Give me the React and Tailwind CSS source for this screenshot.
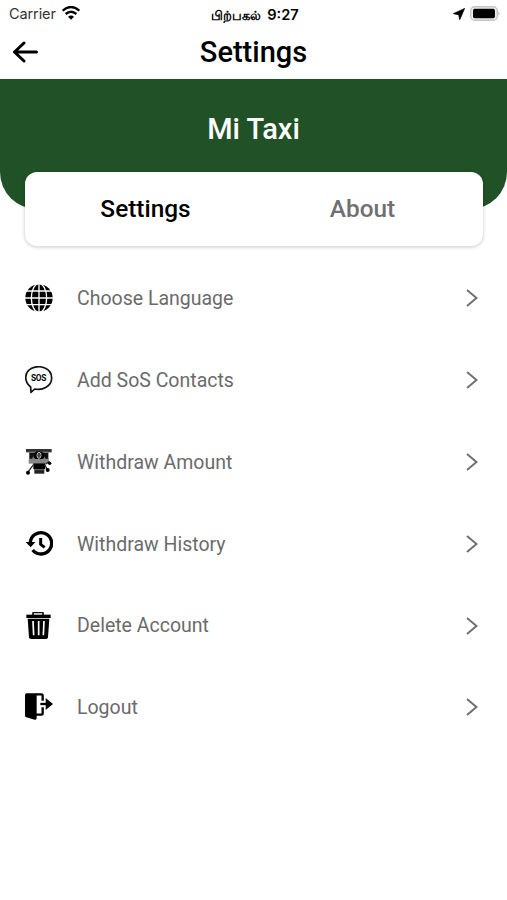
import React, { useState } from 'react';
import clsx from 'clsx';

const GlobeIcon = () => (
    <svg viewBox="0 0 84 84" className="size-7" fill="none" stroke="#fff" strokeWidth="4">
        <circle cx="42" cy="42" r="41" fill="#000" stroke="none" />
        <ellipse cx="42" cy="42" rx="23" ry="43" />
        <path d="M42 0v84M0 42h84M4 21h76M4 62h76" />
    </svg>
);

const SosIcon = () => (
    <svg viewBox="0 0 84 84" className="size-7">
        <path d="M17 63C-4 47-2 18 20 7c25-12 60 0 60 29 0 25-27 38-51 33L18 79Z" fill="none" stroke="#111" strokeWidth="5" strokeLinejoin="round" />
        <text x="41" y="45" textAnchor="middle" textLength="46" className="font-['Roboto',sans-serif] text-[25px] font-bold">SOS</text>
    </svg>
);

const WithdrawIcon = () => (
    <svg viewBox="0 0 84 84" className="size-7">
        <path d="M3 3h77v10H3z" fill="#333" />
        <path d="M12 11h59v28H12z" fill="#777" />
        <path d="M14 15h15l-8 17h-7zM69 15H54l8 17h7z" fill="#111" />
        <ellipse cx="42" cy="23" rx="17" ry="13" fill="#000" />
        <ellipse cx="42" cy="22" rx="6" ry="9" fill="none" stroke="#ccc" strokeWidth="3" />
        <path d="M42 16v13" stroke="#ddd" strokeWidth="2" />
        <path d="M11 33h61v14H11z" fill="#888" />
        <path d="M25 46h36v17H25z" fill="#000" />
        <path d="M28 63h30v14H28z" fill="#222" />
        <path d="M30 65h26" stroke="#999" strokeWidth="2" />
        <path d="M26 49 9 72M59 50l9 16M62 48l12-8" stroke="#333" strokeWidth="4" />
        <circle cx="9" cy="74" r="6" />
        <circle cx="68" cy="66" r="6" />
        <circle cx="74" cy="46" r="5" />
    </svg>
);

const HistoryIcon = () => (
    <svg viewBox="0 0 84 84" className="size-7" fill="none" stroke="#000">
        <path d="M16 38A32 32 0 1 1 23 60" strokeWidth="10" />
        <path d="M2 36h29L17 52Z" fill="#000" stroke="none" />
        <path d="M47 24v19l12 9" strokeWidth="9" />
    </svg>
);

const TrashIcon = () => (
    <svg viewBox="0 0 84 84" className="size-7">
        <path d="M24 9V4q0-3 4-3h22q4 0 4 3v5" fill="none" stroke="#111" strokeWidth="5" />
        <path d="M4 8h73v10H4z" fill="#000" />
        <path d="M8 20h65l-4 56q-1 5-6 5H18q-5 0-6-5Z" fill="#000" />
        <path d="m24 27 2 43M41 27v43M57 27l-2 43" stroke="#fff" strokeWidth="5" />
    </svg>
);

const LogoutIcon = () => (
    <svg viewBox="0 0 84 84" className="size-7">
        <path d="M5 1h26q4 0 4 4v71q0 5-6 4L4 73q-4-1-4-5V6q0-5 5-5Z" fill="#000" />
        <path d="M31 4h18q4 0 4 4v15M33 65h16q4 0 4-4V43" fill="none" stroke="#000" strokeWidth="7" />
        <path d="M46 33h22" fill="none" stroke="#000" strokeWidth="7" />
        <path d="M62 15 84 33 62 51Z" fill="#000" />
    </svg>
);

const menuItems = [
    { label: 'Choose Language', icon: GlobeIcon },
    { label: 'Add SoS Contacts', icon: SosIcon },
    { label: 'Withdraw Amount', icon: WithdrawIcon },
    { label: 'Withdraw History', icon: HistoryIcon },
    { label: 'Delete Account', icon: TrashIcon },
    { label: 'Logout', icon: LogoutIcon },
];

function StatusBar() {
    return (
        <div className="grid h-7 grid-cols-[1fr_auto_1fr] items-center pl-[9px] pr-[6px] font-['Inter','Noto_Sans',sans-serif] text-sm text-black">
            <div className="flex items-center gap-[6px]">
                <span className="text-[14.5px] tracking-[-0.1px] text-[#333]">Carrier</span>
                <svg viewBox="0 0 54 42" className="-mt-0.5 h-[14px] w-[18px]" fill="none" stroke="#000" strokeWidth="7">
                    <path d="M2 14Q27-8 52 14M11 24q16-14 32 0" />
                    <path d="m18 32 9 9 9-9q-9-7-18 0Z" fill="#000" stroke="none" />
                </svg>
            </div>
            <div className="flex items-baseline gap-[6px] pt-0.5 whitespace-nowrap font-semibold">
                <span className="text-[13px]">பிற்பகல்</span>
                <span className="text-[14.6px]">9:27</span>
            </div>
            <div className="flex items-center justify-end gap-[5px]">
                <svg viewBox="0 0 32 32" className="size-[12px]">
                    <path d="M31 1 18 31 15 18 1 15Z" stroke="#000" strokeWidth="2" strokeLinejoin="round" />
                </svg>
                <svg viewBox="0 0 92 44" className="-mt-0.5 h-[15px] w-[31px]">
                    <rect x="2" y="2" width="79" height="40" rx="12" fill="#eee" stroke="#c4c4c4" strokeWidth="4" />
                    <rect x="9" y="8" width="65" height="28" rx="5" />
                    <path d="M84 15q7 7 0 14Z" fill="#bbb" />
                </svg>
            </div>
        </div>
    );
}

export default function App() {
    const [tab, setTab] = useState('Settings');

    return (
        <div className="min-h-[900px] w-full bg-white font-['Roboto',sans-serif]">
            <StatusBar />
            <header className="grid h-[51px] grid-cols-[1fr_auto_1fr] items-center px-3 pb-[3px]">
                <button aria-label="Back">
                    <svg viewBox="0 0 26 22" className="h-[22px] w-[26px]" fill="none" stroke="#000" strokeWidth="3" strokeLinecap="round" strokeLinejoin="round">
                        <path d="M24.5 11H2.5M12 2 2.5 11l9.5 9" />
                    </svg>
                </button>
                <h1 className="text-[29px] leading-none font-medium text-black">Settings</h1>
            </header>

            <div className="h-[130px] rounded-b-[37px] bg-[#215126] pt-[34px] text-center">
                <h2 className="text-[29px] leading-8 font-medium text-white">Mi Taxi</h2>
            </div>
            <div className="relative ml-[25px] mr-6 -mt-[37px] grid h-[74px] grid-cols-2 rounded-xl bg-white px-3 shadow-[0_1px_3px_1px_rgba(0,0,0,0.14)]">
                {['Settings', 'About'].map((name) => (
                    <button
                        key={name}
                        onClick={() => setTab(name)}
                        className={clsx('text-[24.4px] font-medium', tab === name ? 'text-black' : 'text-[#707070]')}
                    >
                        {name}
                    </button>
                ))}
            </div>

            <ul className="mt-[11.5px]">
                {menuItems.map((item) => (
                    <li key={item.label} className="flex h-[81.8px] items-center pl-[25px] pr-[29px]">
                        <item.icon />
                        <span className="ml-6 flex-1 pt-px text-[19.5px] text-[#6b6b6b]">{item.label}</span>
                        <svg viewBox="0 0 12 18" className="h-[18px] w-3" fill="none" stroke="#707070" strokeWidth="2">
                            <path d="m1 1 9.5 8L1 17" />
                        </svg>
                    </li>
                ))}
            </ul>
        </div>
    );
}
